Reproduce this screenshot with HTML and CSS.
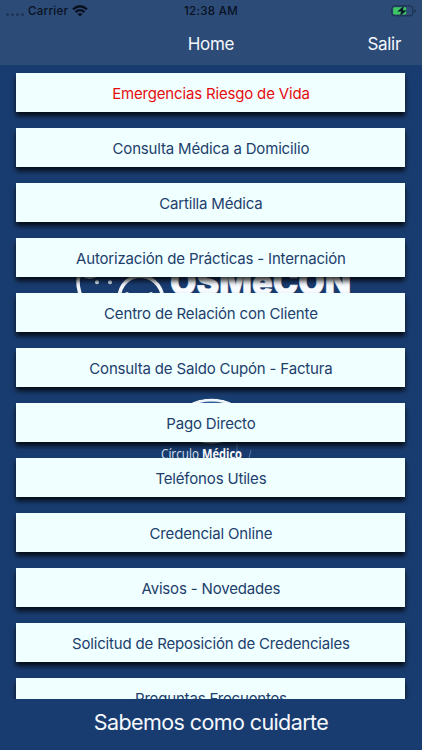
FILE: index.html
```html
<!DOCTYPE html>
<html lang="es">
<head>
<meta charset="utf-8">
<title>Home</title>
<link rel="stylesheet" href="styles.css">
</head>
<body>
<div class="app">
  <header class="top">
    <div class="status">
      <div class="network">
        <span class="signal"><i></i><i></i><i></i><i></i></span>
        <span class="carrier">Carrier</span>
        <svg class="wifi" width="16" height="12" viewBox="0 0 16 12"><g fill="none" stroke="#08111f" stroke-width="2.3"><path d="M1 4.4Q8-1.8 15 4.4"/><path d="M3.5 7.1Q8 3.2 12.5 7.1"/></g><path d="M5.5 9Q8 6.9 10.5 9L8 11.6Z" fill="#08111f"/></svg>
      </div>
      <span class="clock">12:38 AM</span>
      <svg class="battery" width="26" height="12" viewBox="0 0 26 12"><rect x=".8" y=".8" width="21" height="10" rx="2.7" fill="none" stroke="#1a2e4b"/><rect x="2.2" y="2.2" width="13" height="7.4" rx="1.4" fill="#3fc862"/><path d="M23.3 4v4q1.4-.6 1.4-2t-1.4-2" fill="#1a2e4b"/><path d="M12.8 1L6.5 6.5h3.8L8.9 11l6.7-5.6h-3.8Z" fill="#07121c" stroke="#234c5c" stroke-width=".4"/></svg>
    </div>
    <nav class="nav"><span class="title">Home</span><span class="exit">Salir</span></nav>
  </header>
  <main class="list">
    <svg class="brand" width="422" height="633" viewBox="0 65 422 633">
      <g fill="none" stroke="#f4f8fc" stroke-width="3.6">
        <path d="M79 275Q76 286 82 298"/>
        <path d="M119 298C121 269 159 269 163 298"/>
      </g>
      <path d="M81 276h17q-8 6-17 0" fill="#e4ebf4"/>
      <g fill="#dce8f5"><circle cx="97" cy="282.3" r="2"/><circle cx="110" cy="282.3" r="2"/><circle cx="127" cy="294" r="2"/><circle cx="151" cy="294" r="2"/></g>
      <text class="wordmark" x="170" y="294.5" textLength="181" lengthAdjust="spacingAndGlyphs">OSMeCON</text>
      <ellipse cx="211.5" cy="421" rx="32" ry="21" fill="#2e669b" stroke="#f4f8fc" stroke-width="3"/>
      <path d="M187 404Q211 391 236 404" fill="none" stroke="#174071" stroke-width="2"/>
      <text class="caption" x="161" y="459" textLength="38" lengthAdjust="spacingAndGlyphs">Círculo</text>
      <text class="caption strong" x="202" y="459" textLength="40" lengthAdjust="spacingAndGlyphs">Médico</text>
      <path d="M237 451v-7M251 450l-2 8" stroke="#527aa6"/>
    </svg>
    <button class="item urgent">Emergencias Riesgo de Vida</button>
    <button class="item">Consulta Médica a Domicilio</button>
    <button class="item">Cartilla Médica</button>
    <button class="item">Autorización de Prácticas - Internación</button>
    <button class="item">Centro de Relación con Cliente</button>
    <button class="item">Consulta de Saldo Cupón - Factura</button>
    <button class="item">Pago Directo</button>
    <button class="item">Teléfonos Utiles</button>
    <button class="item">Credencial Online</button>
    <button class="item">Avisos - Novedades</button>
    <button class="item">Solicitud de Reposición de Credenciales</button>
    <button class="item">Preguntas Frecuentes</button>
  </main>
  <footer class="slogan">Sabemos como cuidarte</footer>
</div>
</body>
</html>
```
FILE: styles.css
```css
* { box-sizing: border-box; }
body { margin: 0; background: #193c70; font-family: Inter, "Liberation Sans", sans-serif; }
.app { width: 422px; height: 750px; display: flex; flex-direction: column; overflow: hidden; }
.top { flex: 0 0 65px; background: #2c4b77; }
.status { height: 22px; display: grid; grid-template-columns: 1fr auto 1fr; align-items: center; padding: 0 6px; color: #08111f; font-size: 11.5px; font-weight: 500; letter-spacing: .3px; }
.network { display: flex; align-items: center; }
.signal { display: flex; gap: 2px; margin: 7px 4px 0 0; }
.signal i { width: 3px; height: 3px; border-radius: 50%; background: #1e3558; }
.wifi { margin-left: 4px; }
.battery { justify-self: end; margin-right: -1px; }
.nav { height: 43px; display: grid; grid-template-columns: 1fr auto 1fr; align-items: center; color: #f5f8fc; font-size: 17px; letter-spacing: -.3px; }
.title { grid-column: 2; }
.exit { justify-self: end; padding-right: 21px; }
.list { position: relative; flex: 0 0 633.5px; padding: 8.4px 16.6px 0 16.4px; display: flex; flex-direction: column; gap: 16px; overflow: hidden; }
.brand { position: absolute; left: 0; top: 0; }
.wordmark { font-size: 37px; font-weight: 900; fill: #f8fbff; stroke: #f8fbff; stroke-width: .5px; }
.caption { font-family: "Open Sans", sans-serif; font-size: 14px; fill: #d7e2ef; }
.strong { font-weight: 700; fill: #fff; }
.item { position: relative; flex: 0 0 39px; border: 0; padding: 1px 0 0; background: #f0ffff; color: #213e6c; font-family: inherit; font-size: 15px; letter-spacing: -.17px; text-align: center; box-shadow: 0 4px 5px rgba(0, 0, 0, .8); }
.urgent { color: #e60c10; }
.slogan { flex: 1; display: flex; align-items: center; justify-content: center; padding-bottom: 4px; color: #f5f8fc; font-size: 21.5px; letter-spacing: -.6px; }
```
